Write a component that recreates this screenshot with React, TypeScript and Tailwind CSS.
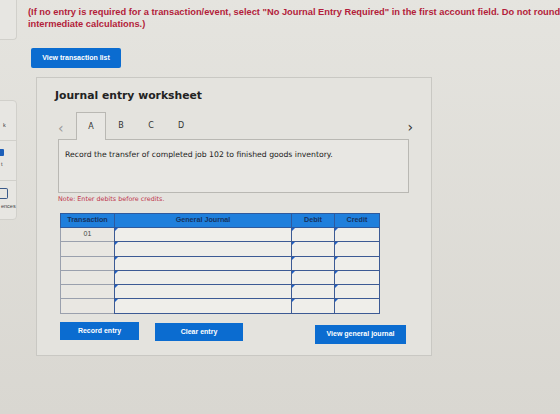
import React from "react";

const rows = ["01", "", "", "", "", ""];

function Marker() {
  return <span className="absolute left-0 top-0 w-0 h-0 border-t-[3px] border-r-[3px] border-t-[#1f5fc4] border-r-transparent" />;
}

function InputCell({ w, last }: { w: string; last?: boolean }) {
  return (
    <div className={`relative ${w} h-full bg-[#efeeea] border-[#3c5a94] border-l-[1.5px] border-b-[1.5px] ${last ? "border-r-[1.5px]" : ""}`}>
      <Marker />
    </div>
  );
}

export default function App() {
  return (
    <div className="w-[560px] h-[414px] overflow-hidden bg-gradient-to-b from-[#e5e4df] to-[#d9d7d1] flex font-['Liberation_Sans',Arial,sans-serif]">
      {/* side rail: the tool cards sit mostly off the left edge */}
      <div className="w-[17px] shrink-0 overflow-hidden">
        <div className="-ml-[27px] w-[44px] flex flex-col">
          <div className="h-[40px] rounded-b-[4px] border border-t-0 border-[#d1d0cb] bg-[#e7e6e2]" />
          <div className="mt-[60px] rounded-[4px] border border-[#d1d0cb] bg-[#e7e6e2] flex flex-col text-[5.5px] leading-[7px] text-[#444]">
            <div className="h-[40px] flex flex-col justify-end pb-[11px] border-b border-[#d1d0cb]">
              <span className="ml-[29px]">k</span>
            </div>
            <div className="h-[40px] flex flex-col justify-end pb-[12px] border-b border-[#d1d0cb]">
              <span className="ml-[26px] w-[4px] h-[7px] bg-[#1d5fb8] rounded-r-[1px] mb-[5px]" />
              <span className="ml-[27px]">t</span>
            </div>
            <div className="h-[38px] flex flex-col justify-end pb-[9px]">
              <span className="ml-[26px] w-[8px] h-[11px] border border-l-0 border-[#3a5a8a] rounded-r-[2px] mb-[4px]" />
              <span className="ml-[27px]">ences</span>
            </div>
          </div>
        </div>
      </div>

      {/* main column */}
      <div className="flex-1 pl-[11px] pt-[6px]">
        <p className="text-[9.3px] leading-[12px] font-bold text-[#b31d3a] whitespace-nowrap">
          (If no entry is required for a transaction/event, select "No Journal Entry Required" in the first account field. Do not round
          <br />
          intermediate calculations.)
        </p>

        <button className="mt-[18px] ml-[3px] w-[90px] h-[20px] bg-[#0b6cd0] rounded-[2px] text-white text-[7px] font-bold flex items-center justify-center">
          View transaction list
        </button>

        <div className="mt-[9px] ml-[8px] w-[396px] h-[279px] bg-[#e4e3de] border border-[#c9c8c3] pl-[21px] pr-[20px]">
          <h1 className="mt-[11px] -ml-[3px] text-[10.8px] leading-[14px] font-bold text-[#222] font-['DejaVu_Sans',Verdana,sans-serif]">
            Journal entry worksheet
          </h1>

          <div className="mt-[8px] flex items-end h-[28px] font-['DejaVu_Sans',Verdana,sans-serif] text-[8px] text-[#333]">
            <span className="w-[18px] h-[22px] flex items-center text-[14px] text-[#999] leading-none">‹</span>
            <div className="w-[30px] h-[28px] border border-b-0 border-[#b9b8b3] bg-[#e8e7e3] flex items-center justify-center relative top-[1px]">A</div>
            <div className="w-[30px] h-[26px] flex items-center justify-center">B</div>
            <div className="w-[30px] h-[26px] flex items-center justify-center">C</div>
            <div className="w-[30px] h-[26px] flex items-center justify-center">D</div>
            <span className="ml-auto mr-[-2px] h-[24px] flex items-center text-[14px] text-[#333] leading-none">›</span>
          </div>

          <div className="w-[351px] h-[54px] border border-[#b9b8b3] bg-[#e8e7e3] px-[6px] pt-[9px] text-[7.7px] text-[#222] font-['DejaVu_Sans',Verdana,sans-serif]">
            Record the transfer of completed job 102 to finished goods inventory.
          </div>

          <p className="mt-[2px] text-[6.4px] leading-[9px] text-[#c0334b] font-['DejaVu_Sans',Verdana,sans-serif]">
            Note: Enter debits before credits.
          </p>

          {/* journal grid */}
          <div className="mt-[9px] ml-[2px] w-[320px]">
            <div className="flex h-[15px] bg-[#1f7fdc] text-[7.2px] font-bold text-[#17335f] border border-[#2e5a9e]">
              <div className="w-[54px] flex items-center justify-center border-r border-[#2e5a9e]">Transaction</div>
              <div className="w-[177px] flex items-center justify-center border-r border-[#2e5a9e]">General Journal</div>
              <div className="w-[43px] flex items-end justify-center pb-[1px] border-r border-[#2e5a9e]">Debit</div>
              <div className="flex-1 flex items-end justify-center pb-[1px]">Credit</div>
            </div>
            {rows.map((r, i) => (
              <div key={i} className="flex h-[14.3px]">
                <div className="w-[54px] h-full bg-[#e9e7e2] border-l border-b border-[#9aa0ad] text-[7px] text-[#444] flex items-center justify-center">
                  {r}
                </div>
                <InputCell w="w-[177px]" />
                <InputCell w="w-[43px]" />
                <InputCell w="flex-1" last />
              </div>
            ))}
          </div>

          <div className="mt-[8px] ml-[2px] flex items-start text-white text-[7px] font-bold">
            <button className="w-[79px] h-[18px] bg-[#0b6cd0] flex items-center justify-center">Record entry</button>
            <button className="ml-[16px] mt-[1px] w-[88px] h-[18px] bg-[#0b6cd0] flex items-center justify-center">Clear entry</button>
            <button className="ml-[72px] mt-[3px] w-[91px] h-[19px] bg-[#0b6cd0] flex items-center justify-center">View general journal</button>
          </div>
        </div>
      </div>
    </div>
  );
}
